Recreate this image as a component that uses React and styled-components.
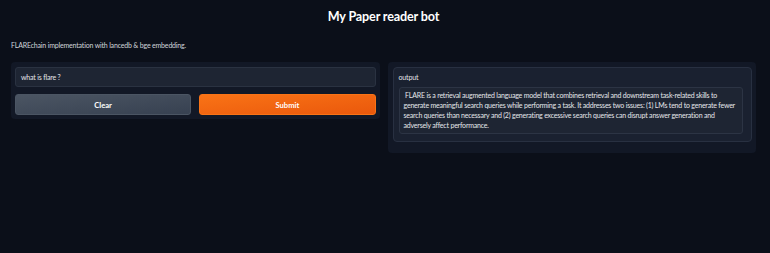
import React from 'react';
import styled, { createGlobalStyle } from 'styled-components';

// ---------------------------------------------------------------------------
// Global
// ---------------------------------------------------------------------------
const GlobalStyle = createGlobalStyle`
  html, body {
    margin: 0;
    padding: 0;
    background: #0b0f19;
    font-family: "Lato", "Noto Sans", sans-serif;
    color: #e5e7eb;
  }
  * { box-sizing: border-box; }
`;

// ---------------------------------------------------------------------------
// Styled Components
// ---------------------------------------------------------------------------
const Page = styled.div`
  min-height: 253px;
  padding: 0 14px 0 11px;
`;

const Title = styled.h1`
  margin: 0;
  padding-top: 8px;
  height: 34px;
  font-size: 12.6px;
  line-height: 18px;
  letter-spacing: -0.15px;
  font-weight: 700;
  text-align: center;
  color: #ffffff;
`;

const Description = styled.p`
  margin: 0;
  height: 28px;
  padding-top: 6px;
  font-size: 7px;
  letter-spacing: -0.18px;
  line-height: 10px;
  color: #d1d5db;
`;

const Row = styled.div`
  display: grid;
  grid-template-columns: 1fr 1fr;
  gap: 8px;
  align-items: start;
`;

const Panel = styled.div`
  background: #121826;
  border-radius: 4px;
  padding: ${(p) => p.$pad};
`;

const TextInput = styled.div`
  height: 20px;
  padding: 0 5px;
  display: flex;
  align-items: center;
  background: #1e2533;
  border: 1px solid #2a3241;
  border-radius: 3px;
  font-size: 7px;
  letter-spacing: -0.18px;
  color: #e5e7eb;
`;

const ButtonRow = styled.div`
  display: grid;
  grid-template-columns: 1fr 1fr;
  gap: 8px;
  margin-top: 7px;
`;

const Button = styled.button`
  height: 21px;
  border-radius: 3px;
  font-family: inherit;
  font-size: 7.6px;
  font-weight: 700;
  color: #ffffff;
  cursor: pointer;
  border: 1px solid ${(p) => (p.$primary ? '#f97316' : '#4b5563')};
  background: ${(p) =>
    p.$primary
      ? 'linear-gradient(to bottom right, #f97316, #ea580c)'
      : 'linear-gradient(to bottom right, #4b5563, #374151)'};
`;

const Block = styled.div`
  background: #1a2130;
  border: 1px solid #283041;
  border-radius: 4px;
  padding: 4px 8px 7px 5px;
`;

const Label = styled.div`
  font-size: 7px;
  letter-spacing: -0.15px;
  line-height: 10px;
  color: #e5e7eb;
  margin-bottom: 5px;
`;

const OutputBox = styled.div`
  background: #1e2533;
  border: 1px solid #2c3444;
  border-radius: 3px;
  padding: 2px 2px 3px 4px;
  font-size: 7px;
  letter-spacing: -0.2px;
  line-height: 10px;
  color: #e5e7eb;
  white-space: pre-wrap;
`;

const answer =
  ' FLARE is a retrieval augmented language model that combines retrieval and downstream task-related skills to generate meaningful search queries while performing a task. It addresses two issues: (1) LMs tend to generate fewer search queries than necessary and (2) generating excessive search queries can disrupt answer generation and adversely affect performance.';

const App = () => {
  return (
    <Page>
      <GlobalStyle />
      <Title>My Paper reader bot</Title>
      <Description>FLAREchain implementation with lancedb &amp; bge embedding.</Description>

      <Row>
        <Panel $pad="5px 4px 4px 4px">
          <TextInput>what is flare ?</TextInput>
          <ButtonRow>
            <Button>Clear</Button>
            <Button $primary>Submit</Button>
          </ButtonRow>
        </Panel>

        <Panel $pad="5px 4px 11px 5px">
          <Block>
            <Label>output</Label>
            <OutputBox>{answer}</OutputBox>
          </Block>
        </Panel>
      </Row>
    </Page>
  );
};

export default App;
